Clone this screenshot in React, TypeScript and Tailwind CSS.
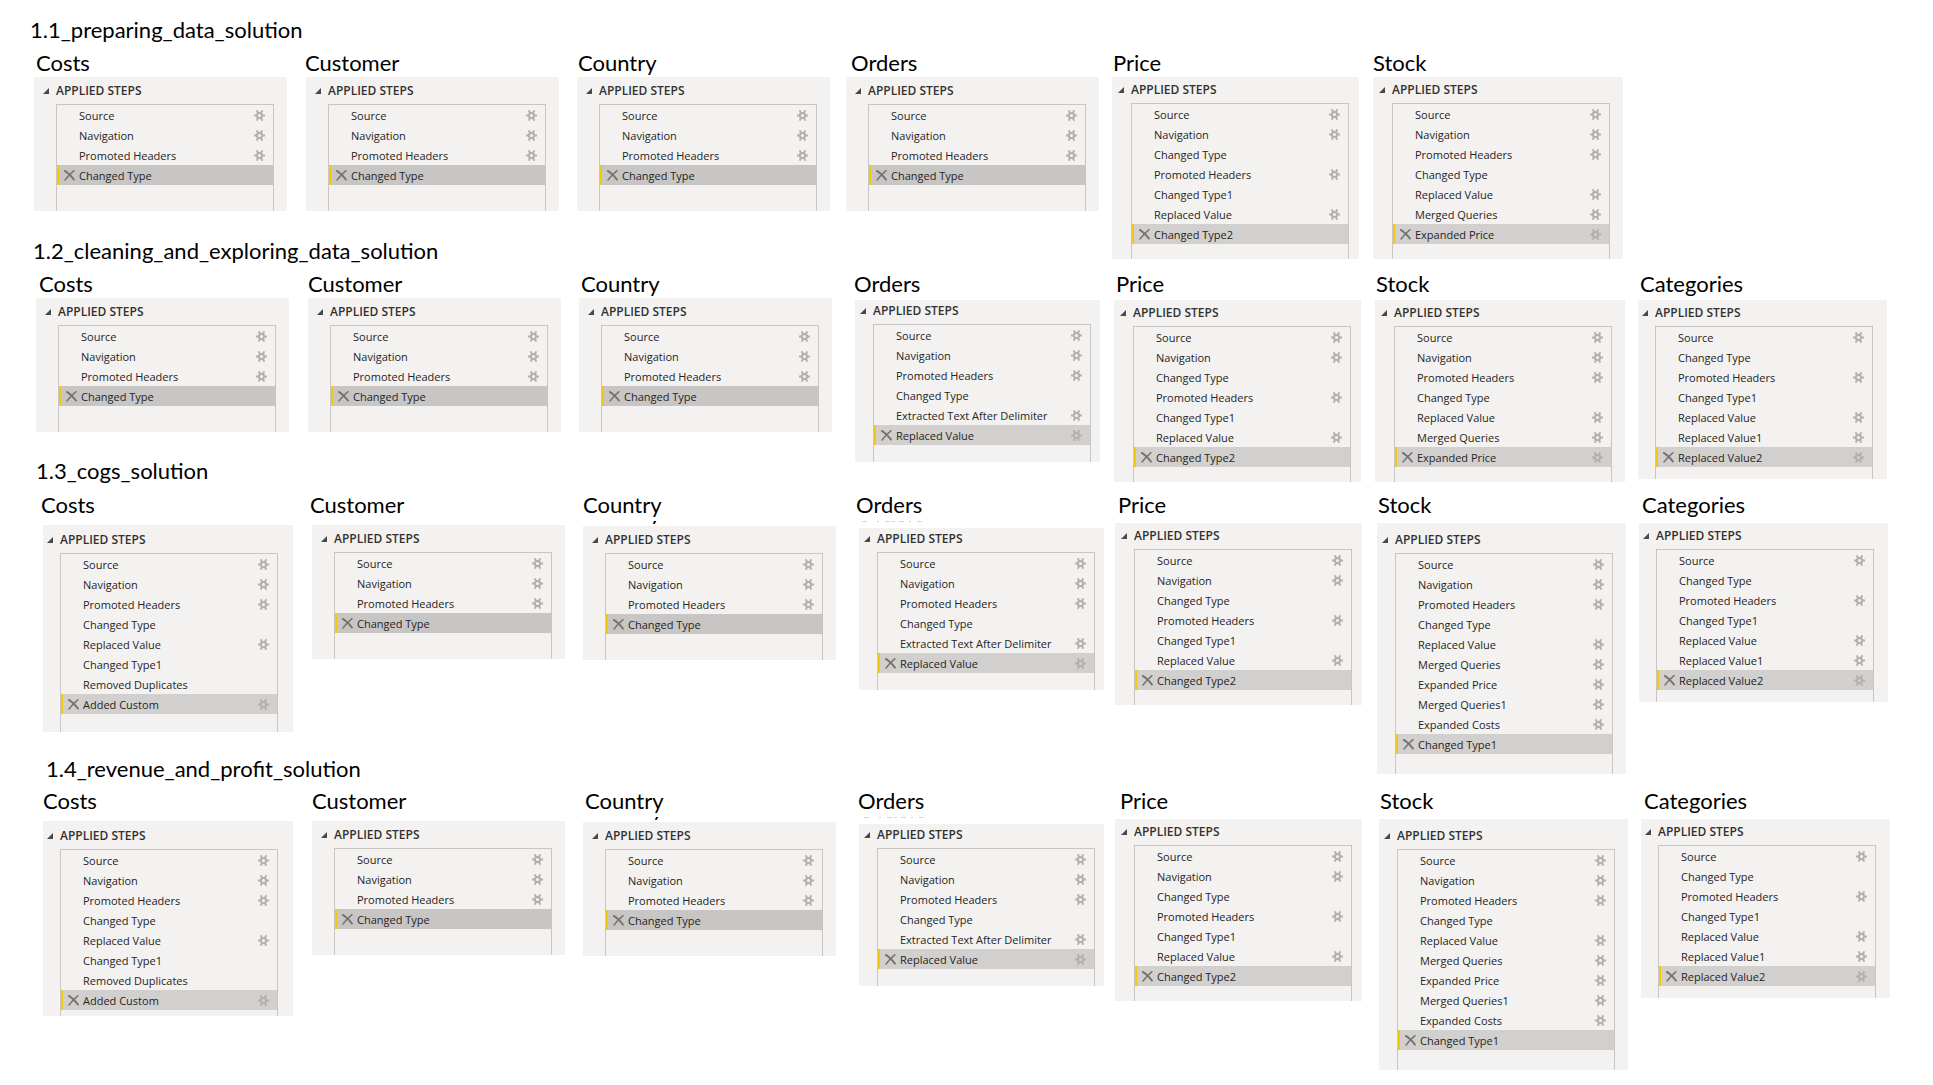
import React from "react";
import clsx from "clsx";

type Step = { name: string; gear?: boolean };
type Variant = "wide" | "price" | "stock" | "orders" | "category" | "costs" | "costsShort" | "stockLong";
type Query = { title: string; steps: Step[]; variant: Variant; place: string; trace?: "tick" | "dots" };
type Section = { title: string; top: string; headPad: string; titlePad: string; grid: string; queries: Query[] };

const g = (name: string): Step => ({ name, gear: true });
const n = (name: string): Step => ({ name });

const basic = [g("Source"), g("Navigation"), g("Promoted Headers"), n("Changed Type")];
const orders = [...basic, g("Extracted Text After Delimiter"), g("Replaced Value")];
const price = [
  g("Source"), g("Navigation"), n("Changed Type"), g("Promoted Headers"),
  n("Changed Type1"), g("Replaced Value"), n("Changed Type2"),
];
const stock = [...basic, g("Replaced Value"), g("Merged Queries"), g("Expanded Price")];
const stockLong = [...stock, g("Merged Queries1"), g("Expanded Costs"), n("Changed Type1")];
const categories = [
  g("Source"), n("Changed Type"), g("Promoted Headers"), n("Changed Type1"),
  g("Replaced Value"), g("Replaced Value1"), g("Replaced Value2"),
];
const costs = [...basic, g("Replaced Value"), n("Changed Type1"), n("Removed Duplicates"), g("Added Custom")];

const variants: Record<Variant, { pad: string; head: string; tail: string; selected: string }> = {
  wide: { pad: "pl-[22px] pr-[13px]", head: "h-[27px]", tail: "h-[26px]", selected: "bg-[#c8c6c4]" },
  price: { pad: "pl-[19px] pr-[10px]", head: "h-[26px]", tail: "h-[15px]", selected: "bg-[#d2d0ce]" },
  stock: { pad: "pl-[19px] pr-[13px]", head: "h-[26px]", tail: "h-[15px]", selected: "bg-[#d2d0ce]" },
  orders: { pad: "pl-[18px] pr-[9px]", head: "h-[24px]", tail: "h-[17px]", selected: "bg-[#d2d0ce]" },
  category: { pad: "pl-[17px] pr-[14px]", head: "h-[26px]", tail: "h-[12px]", selected: "bg-[#d2d0ce]" },
  costs: { pad: "pl-[17px] pr-[15px]", head: "h-[28px]", tail: "h-[18px]", selected: "bg-[#d2d0ce]" },
  costsShort: { pad: "pl-[17px] pr-[15px]", head: "h-[28px]", tail: "h-[6px]", selected: "bg-[#d2d0ce]" },
  stockLong: { pad: "pl-[18px] pr-[13px]", head: "h-[30px]", tail: "h-[20px]", selected: "bg-[#d2d0ce]" },
};

const sections: Section[] = [
  {
    title: "1.1_preparing_data_solution",
    top: "pt-4",
    headPad: "pl-[30px]",
    titlePad: "mt-[5px] pl-[36px] pr-[47px]",
    grid: "pl-[34px] pr-[43px] grid-cols-[272fr_271fr_269fr_266fr_261fr_265fr_252fr]",
    queries: [
      { title: "Costs", steps: basic, variant: "wide", place: "mr-[19px]" },
      { title: "Customer", steps: basic, variant: "wide", place: "mr-[18px]" },
      { title: "Country", steps: basic, variant: "wide", place: "mr-[16px]" },
      { title: "Orders", steps: basic, variant: "wide", place: "mr-[13px]" },
      { title: "Price", steps: price, variant: "price", place: "mr-[14px]" },
      { title: "Stock", steps: stock, variant: "stock", place: "mr-[15px]" },
    ],
  },
  {
    title: "1.2_cleaning_and_exploring_data_solution",
    top: "-mt-[22px]",
    headPad: "pl-[33px]",
    titlePad: "mt-[5px] pl-[39px] pr-[44px]",
    grid: "pl-[36px] pr-[46px] grid-cols-[272fr_271fr_276fr_259fr_261fr_263fr_249fr]",
    queries: [
      { title: "Costs", steps: basic, variant: "wide", place: "mr-[19px]" },
      { title: "Customer", steps: basic, variant: "wide", place: "mr-[18px]" },
      { title: "Country", steps: basic, variant: "wide", place: "mr-[23px]" },
      { title: "Orders", steps: orders, variant: "orders", place: "mr-[14px] mt-0.5" },
      { title: "Price", steps: price, variant: "price", place: "mr-[14px] mt-0.5" },
      { title: "Stock", steps: stock, variant: "stock", place: "mr-[13px] mt-0.5" },
      { title: "Categories", steps: categories, variant: "category", place: "mt-0.5" },
    ],
  },
  {
    title: "1.3_cogs_solution",
    top: "-mt-[25px]",
    headPad: "pl-[36px]",
    titlePad: "mt-[6px] mb-1 pl-[41px] pr-[42px]",
    grid: "pl-[43px] pr-[45px] grid-cols-[269fr_271fr_276fr_256fr_262fr_262fr_249fr]",
    queries: [
      { title: "Costs", steps: costs, variant: "costs", place: "mr-[19px] mt-0.5" },
      { title: "Customer", steps: basic, variant: "wide", place: "mr-[18px] mt-0.5" },
      { title: "Country", steps: basic, variant: "wide", place: "mr-[23px] mt-[3px]", trace: "tick" },
      { title: "Orders", steps: orders, variant: "orders", place: "mr-[11px] mt-[5px]", trace: "dots" },
      { title: "Price", steps: price, variant: "price", place: "mr-[15px]" },
      { title: "Stock", steps: stockLong, variant: "stockLong", place: "mr-[13px]" },
      { title: "Categories", steps: categories, variant: "category", place: "" },
    ],
  },
  {
    title: "1.4_revenue_and_profit_solution",
    top: "-mt-[19px]",
    headPad: "pl-[46px]",
    titlePad: "mt-[4px] mb-1 pl-[43px] pr-[40px]",
    grid: "pl-[43px] pr-[43px] grid-cols-[269fr_271fr_276fr_256fr_264fr_262fr_249fr]",
    queries: [
      { title: "Costs", steps: costs, variant: "costsShort", place: "mr-[19px] mt-0.5" },
      { title: "Customer", steps: basic, variant: "wide", place: "mr-[18px] mt-0.5" },
      { title: "Country", steps: basic, variant: "wide", place: "mr-[23px] mt-[3px]", trace: "tick" },
      { title: "Orders", steps: orders, variant: "orders", place: "mr-[11px] mt-[5px]", trace: "dots" },
      { title: "Price", steps: price, variant: "price", place: "mr-[17px]" },
      { title: "Stock", steps: stockLong, variant: "stockLong", place: "mr-[13px]" },
      { title: "Categories", steps: categories, variant: "category", place: "" },
    ],
  },
];

function GearIcon() {
  return (
    <svg width="11" height="11" viewBox="0 0 11 11" fill="none" stroke="currentColor" aria-hidden="true">
      <circle cx="5.5" cy="5.5" r="2.6" strokeWidth="2" />
      <path d="M0 5.5H3M8 5.5H11M2.7 0.4L4.2 3.2M8.3 0.4L6.8 3.2M2.7 10.6L4.2 7.8M8.3 10.6L6.8 7.8" strokeWidth="2" />
    </svg>
  );
}

function DeleteIcon() {
  return (
    <svg width="11" height="11" viewBox="0 0 11 11" fill="none" stroke="#767472" strokeLinecap="round" aria-hidden="true">
      <path d="M0.8 0.9C3.6 2.6 7.4 6.4 10 9.6" strokeWidth="1.9" />
      <path d="M10 0.6C6.8 3.4 3.4 6.8 1 10" strokeWidth="1.4" />
    </svg>
  );
}

function Trace({ kind }: { kind: "tick" | "dots" }) {
  if (kind === "tick") {
    return (
      <svg className="absolute left-[69px] top-[30px]" width="5" height="4" viewBox="0 0 5 4" aria-hidden="true">
        <path d="M2 0H4.4L2.6 3H1Z" fill="#000" />
      </svg>
    );
  }
  return (
    <svg className="absolute left-[5px] top-[30px]" width="62" height="1" viewBox="0 0 62 1" aria-hidden="true">
      <path d="M1 .5H6M16 .5H18M24 .5H29M31 .5H34M38 .5H43M48 .5H50M56 .5H61" stroke="#d4d4d4" />
    </svg>
  );
}

function Panel({ query, labelId }: { query: Query; labelId: string }) {
  const v = variants[query.variant];
  return (
    <article aria-labelledby={labelId} className={clsx("bg-[#f3f2f1]", v.pad, query.place)}>
      <div className={clsx("flex items-end pb-[5px]", v.head)}>
        <button type="button" className="-ml-[13px] flex items-center gap-[7px] text-xs leading-4 font-semibold whitespace-nowrap text-[#323130]">
          <svg width="6" height="6" viewBox="0 0 6 6" aria-hidden="true">
            <path d="M6 0V6H0Z" fill="#4a4846" />
          </svg>
          APPLIED STEPS
        </button>
      </div>
      <div className="border-x border-t border-[#c8c6c4]">
        <ul>
          {query.steps.map((step, i) => {
            const selected = i === query.steps.length - 1;
            return (
              <li
                key={step.name}
                className={clsx(
                  "flex h-5 items-center border-l-2 pr-2 text-[11px] leading-4 text-[#252423]",
                  selected ? "border-[#f2c811]" : "border-transparent",
                  selected && v.selected,
                )}
              >
                <span className="flex w-5 shrink-0 pl-[5px]">
                  {selected && (
                    <button type="button" aria-label={`Delete ${step.name}`}>
                      <DeleteIcon />
                    </button>
                  )}
                </span>
                <span className="grow pt-0.5 whitespace-nowrap">{step.name}</span>
                {step.gear && (
                  <button type="button" aria-label={`Settings for ${step.name}`} className="shrink-0 text-[#b3b0ad]">
                    <GearIcon />
                  </button>
                )}
              </li>
            );
          })}
        </ul>
        <div className={v.tail} />
      </div>
    </article>
  );
}

export default function App() {
  return (
    <main className="min-h-screen bg-white font-['Open_Sans','Noto_Sans',sans-serif]">
      {sections.map((section, s) => (
        <section key={section.title} className={section.top}>
          <h2 className={clsx("font-['Lato',sans-serif] text-[22px] leading-7 text-black", section.headPad)}>{section.title}</h2>
          <div
            className={clsx(
              "grid grid-cols-[269fr_273fr_273fr_262fr_260fr_264fr_249fr] font-['Lato',sans-serif] text-[22px] leading-7 text-black",
              section.titlePad,
            )}
          >
            {section.queries.map((q, i) => (
              <h3 key={q.title} id={`query-${s}-${i}`} className="relative">
                {q.title}
                {q.trace && <Trace kind={q.trace} />}
              </h3>
            ))}
          </div>
          <div className={clsx("grid items-start", section.grid)}>
            {section.queries.map((q, i) => (
              <Panel key={q.title} query={q} labelId={`query-${s}-${i}`} />
            ))}
          </div>
        </section>
      ))}
    </main>
  );
}
